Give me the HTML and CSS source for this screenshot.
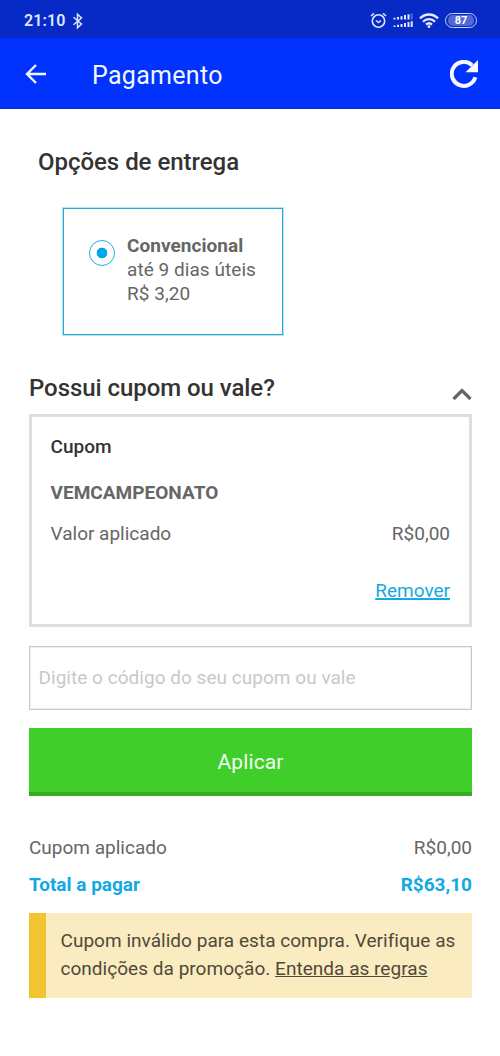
FILE: index.html
```html
<!DOCTYPE html>
<html lang="pt-BR">
<head>
<meta charset="utf-8">
<title>Pagamento</title>
<link rel="stylesheet" href="styles.css">
</head>
<body>
<div class="status-bar">
  <span class="clock">21:10</span>
  <svg class="bluetooth" width="12" height="18" viewBox="0 0 12 18"><path d="M1.500 5.200 9.500 12 5.500 15.800V2.200l4 3.800-8 6.800" /></svg>
  <div class="status-icons">
    <svg width="17" height="17" viewBox="0 0 17 17" class="line"><circle cx="8.5" cy="9" r="6.2"/><path d="M1 4 4 1.3M16 4 13 1.3M6 8.5l2.5 2 2.5-2"/></svg>
    <svg width="20" height="16" viewBox="0 0 20 16" class="solid"><path d="M.5 4.700h2v1.800h-2zM4 4h2v2.500H4zM7.500 3.200h2v3.300h-2zM11 2.100h2v4.400h-2zM14.500 1.200h2v5.300h-2zM.5 12.500h2V14h-2zM4 11.700h2V14H4zM7.500 10.900h2V14h-2zM11 9.900h2V14h-2zM14.500 9h2v5h-2zM17.700 8.200h2V14h-2z"/><path opacity=".35" d="M17.700.500h2v6h-2z"/></svg>
    <svg width="20" height="16" viewBox="0 0 20 16" class="wifi"><path d="M1 5.400C6 .200 14 .200 19 5.400M4 8.700c3.400-3.500 8.600-3.500 12 0M7 11.700c1.800-1.700 4.200-1.700 6 0"/><circle cx="10" cy="13.700" r="1.400"/></svg>
    <span class="battery"><span class="level">87</span></span>
  </div>
</div>
<header class="app-bar">
  <svg width="22" height="20" viewBox="0 0 22 20" class="back"><path d="M21 10H2M11 1 2 10l9 9"/></svg>
  <h1>Pagamento</h1>
  <svg width="28" height="28" viewBox="0 0 28 28" class="refresh"><path class="arc" d="M25.300 17.200A12 12 0 1 1 22.200 5.300"/><path class="tip" d="M28 0v12.300H15.500z"/></svg>
</header>
<main>
  <section class="delivery">
    <h2>Opções de entrega</h2>
    <label class="option">
      <span class="radio"></span>
      <span class="option-text"><b>Convencional</b><span class="days">até 9 dias úteis</span><span class="price">R$ 3,20</span></span>
    </label>
  </section>
  <section class="coupon">
    <div class="coupon-head">
      <h2>Possui cupom ou vale?</h2>
      <svg width="20" height="14" viewBox="0 0 20 14" class="chevron"><path d="M1.500 12 10 3.500l8.500 8.500"/></svg>
    </div>
    <div class="coupon-card">
      <h3>Cupom</h3>
      <b class="code">VEMCAMPEONATO</b>
      <div class="row"><span class="applied">Valor aplicado</span><span class="amount">R$0,00</span></div>
      <a class="remove">Remover</a>
    </div>
    <div class="field"><span class="hint">Digite o código do seu cupom ou vale</span></div>
    <div class="apply"><span class="apply-text">Aplicar</span></div>
  </section>
  <section class="summary">
    <div class="row"><span class="sum-label">Cupom aplicado</span><span class="amount">R$0,00</span></div>
    <div class="row total"><b class="total-label">Total a pagar</b><b class="total-value">R$63,10</b></div>
    <div class="notice"><span class="n1">Cupom inválido para esta compra. Verifique as</span><br><span class="n2">condições da promoção. <u>Entenda as regras</u></span></div>
  </section>
</main>
</body>
</html>
```
FILE: styles.css
```css
* { box-sizing: border-box; }
body { margin: 0; width: 500px; height: 1056px; overflow: hidden; background: #fff; color: #666; font: 19px/24px Roboto, sans-serif; white-space: nowrap; }
h1, h2, h3 { margin: 0; font-weight: 500; }
svg { display: block; fill: none; flex: none; }
.status-bar { height: 38px; background: #072ac6; color: #dfe6ff; display: flex; align-items: center; padding: 3px 23px 0 24px; }
.clock { font-size: 16px; font-weight: 600; letter-spacing: .1px; line-height: 20px; padding-top: 1px; }
.bluetooth { margin-left: 7px; stroke: #dfe6ff; stroke-width: 1.5; }
.status-icons { margin-left: auto; display: flex; align-items: center; gap: 6px; }
.line { stroke: #dfe6ff; stroke-width: 1.6; }
.solid { fill: #dfe6ff; }
.wifi { stroke: #e6ecff; stroke-width: 2.3; }
.wifi circle { fill: #e6ecff; stroke: none; }
.battery { width: 32px; height: 15px; border: 1.5px solid #c9d4ff; border-radius: 8px; padding: 1px 2px; display: flex; }
.level { flex: 1; border-radius: 5px; background: #5468d5; color: #fff; font-size: 11px; font-weight: 700; line-height: 11px; text-align: center; }
.app-bar { height: 71px; background: #0232fe; border-bottom: 1px solid #052bd0; color: #f4f6ff; display: flex; align-items: center; padding: 2px 22px 0 25px; }
.back { stroke: #f4f6ff; stroke-width: 2.4; }
.app-bar h1 { margin: 3px auto 0 45px; font-size: 25px; font-weight: 400; line-height: 30px; letter-spacing: .3px; }
.refresh .arc { stroke: #f7f8ff; stroke-width: 4; }
.refresh .tip { fill: #f7f8ff; }
main { padding: 37px 28px 0 29px; }
h2 { font-size: 24px; line-height: 32px; color: #333; letter-spacing: -.06px; }
.delivery h2 { padding-left: 9px; letter-spacing: -.03px; }
.option { width: 220px; height: 127px; margin: 30px 0 0 34px; border: 1px solid #27a9d6; outline: 1px solid #27a9d650; outline-offset: 0; display: flex; padding: 25px 0 0 25px; gap: 12px; }
.radio { width: 26px; height: 26px; margin-top: 5.500px; border: 1.5px solid #22aee2; border-radius: 50%; background: radial-gradient(circle, #00a8eb 5px, transparent 5.700px); flex: none; }
.option-text { display: flex; flex-direction: column; align-items: flex-start; line-height: 23.900px; letter-spacing: .05px; }
.coupon-head { display: flex; justify-content: space-between; margin-top: 37px; height: 42px; }
.chevron { margin-top: 15px; stroke: #666; stroke-width: 3.2; }
.coupon-card { height: 213px; border: 3px solid #dedede; padding: 18px 19px 0 18.500px; display: flex; flex-direction: column; }
h3 { font-size: 19px; line-height: 24px; color: #333; }
.code { margin-top: 22px; letter-spacing: .03px; }
.coupon-card .row { margin-top: 17px; }
.row { display: flex; justify-content: space-between; }
.coupon-card .row + .remove { margin-top: 33px; }
.remove { align-self: flex-end; color: #16a9df; text-decoration: underline; text-decoration-thickness: 1.5px; }
.field { height: 64px; margin-top: 19px; border: 1px solid #c9c9c9; outline: 1px solid #d2d2d260; outline-offset: -2px; padding: 19px 8.500px; color: #c8c8c8; letter-spacing: .03px; }
.apply { height: 68px; margin-top: 18px; background: #40ce2a; border-bottom: 4px solid #37aa24; color: #f3fff1; font-size: 21px; line-height: 68px; letter-spacing: .1px; text-align: center; }
.summary { padding-top: 40px; }
.total { margin-top: 13px; color: #12a8e5; }
.notice { margin-top: 16px; height: 85px; border-left: 17px solid #f0c531; background: #faecc0; color: #50493a; padding: 14px 0 0 14.500px; line-height: 28px; letter-spacing: .03px; }
```
